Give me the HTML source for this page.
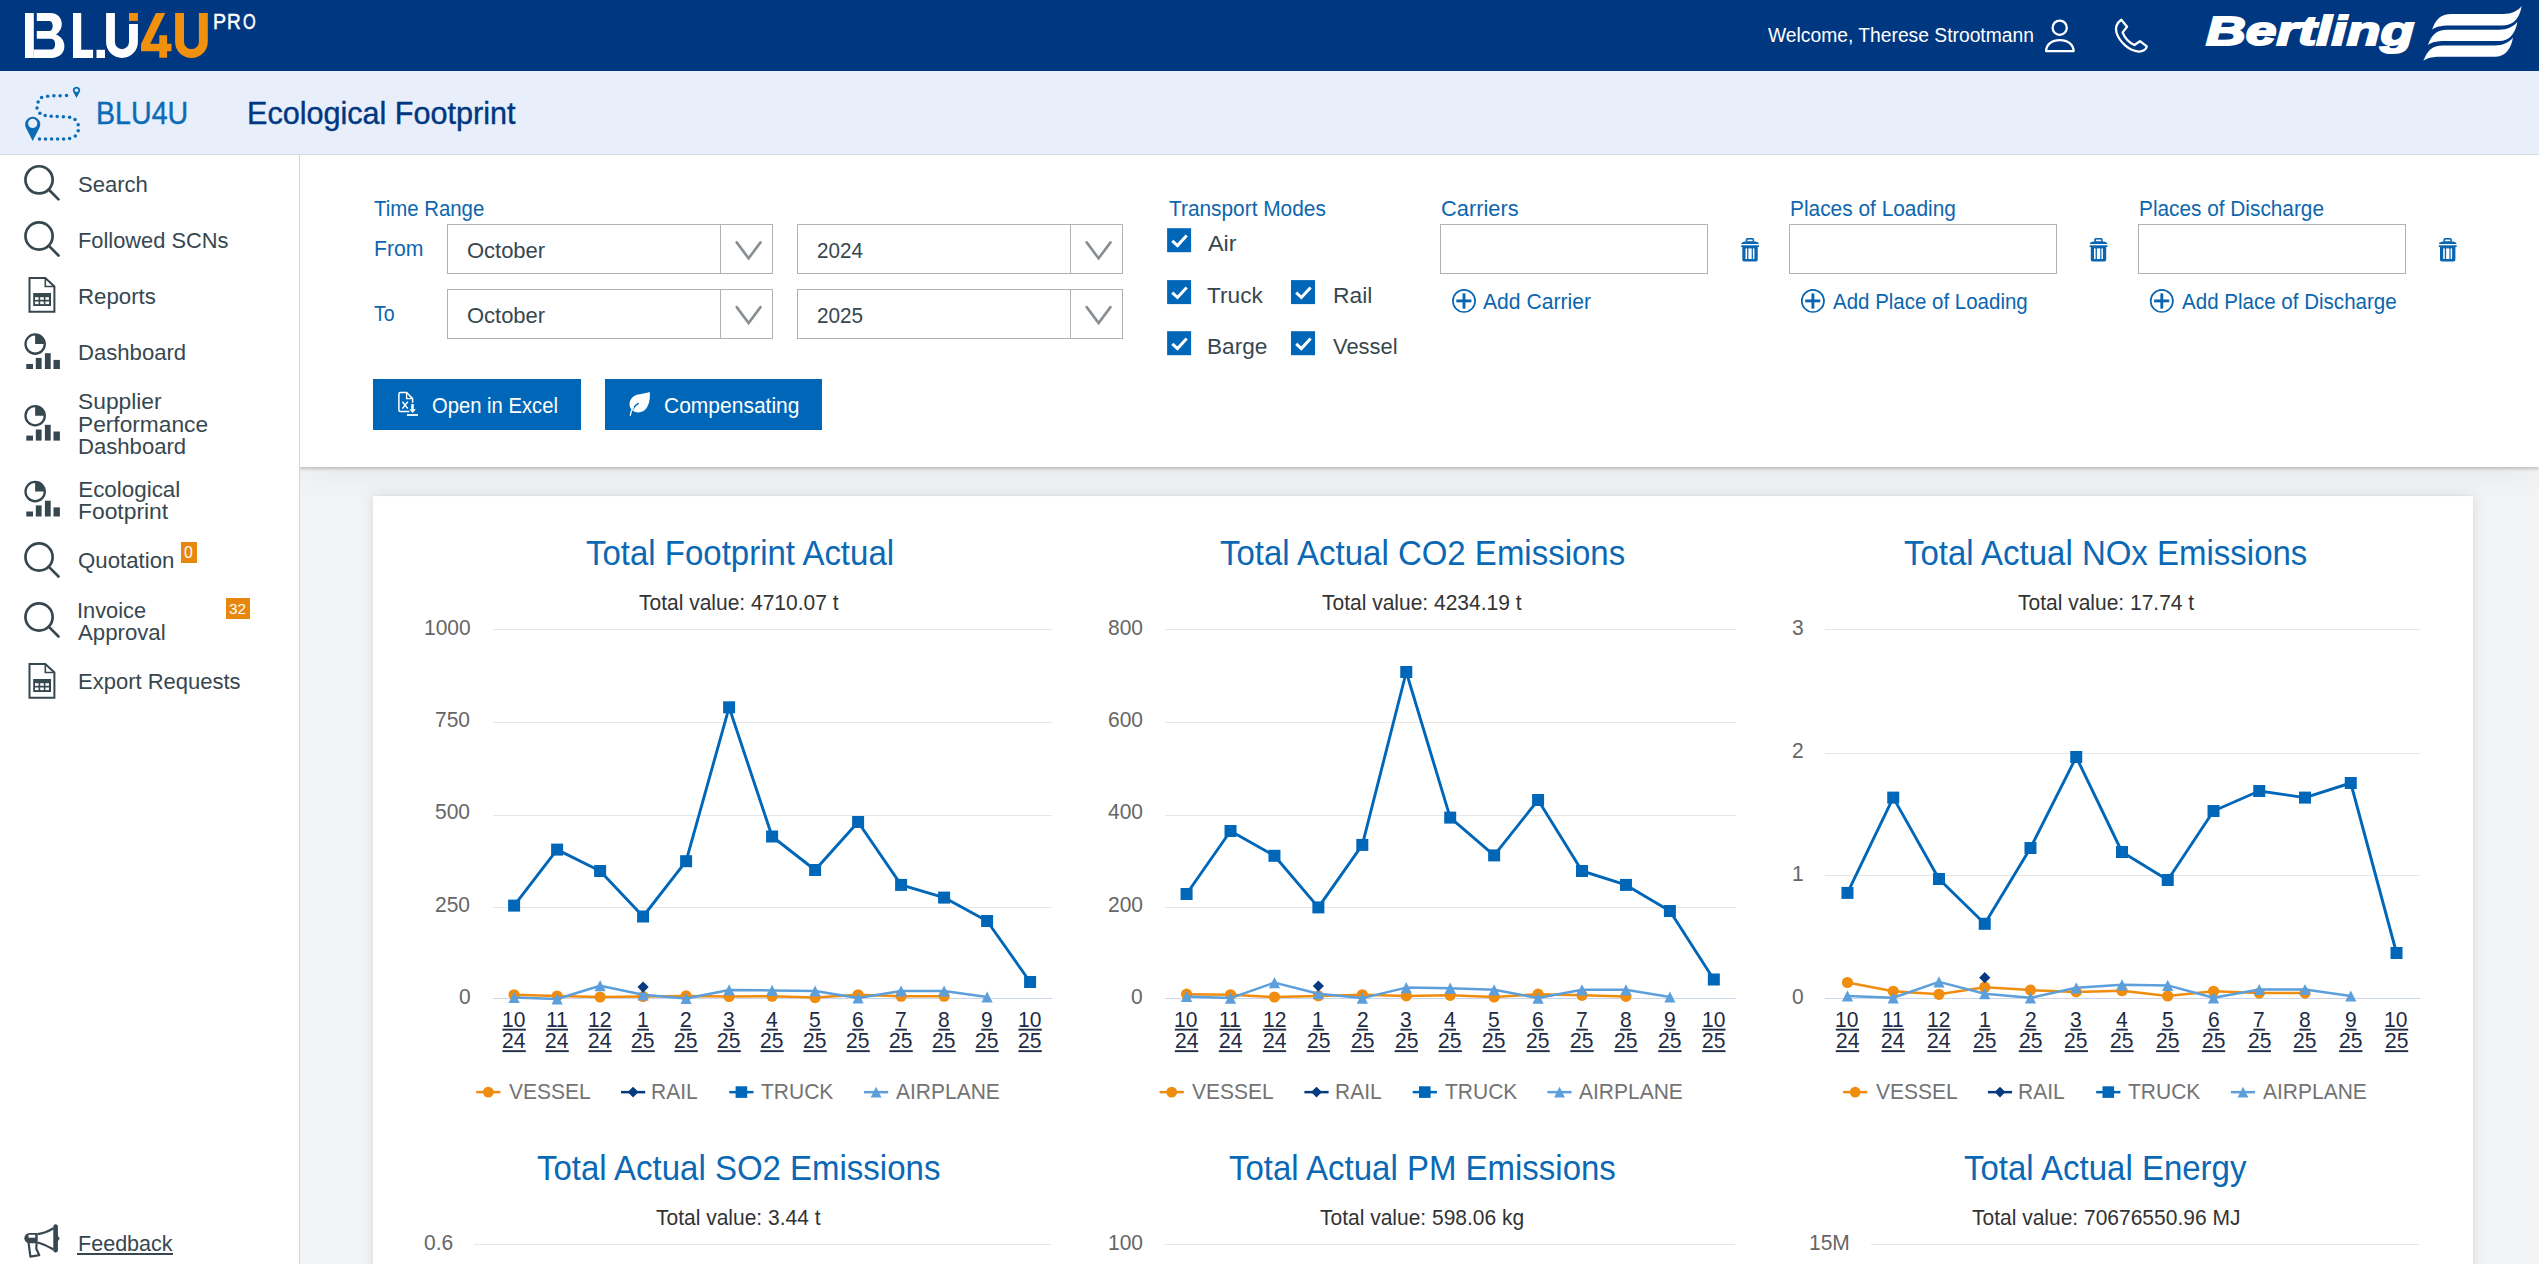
<!DOCTYPE html>
<html><head><meta charset="utf-8"><style>
html,body{margin:0;padding:0}
body{width:2539px;height:1264px;overflow:hidden;position:relative;background:#f3f4f6;font-family:"Liberation Sans",sans-serif}
.t{position:absolute;white-space:nowrap;line-height:1;transform-origin:0 0}
svg{position:absolute;overflow:visible}
</style></head><body>
<div style="position:absolute;left:373px;top:496px;width:2100px;height:800px;background:#fff;box-shadow:0 0 14px rgba(0,0,0,0.10),0 0 2px rgba(0,0,0,0.06)"></div>
<div style="position:absolute;left:300px;top:155px;width:2239px;height:312px;background:#fff;box-shadow:0 2px 3px rgba(0,0,0,0.20),0 6px 40px rgba(0,0,0,0.06)"></div>
<div style="position:absolute;left:0px;top:0px;width:2539px;height:71px;background:#003781"></div>
<div style="position:absolute;left:0px;top:71px;width:2539px;height:83px;background:#e8eefa"></div>
<div style="position:absolute;left:0px;top:154px;width:2539px;height:1px;background:#d6dbe3"></div>
<div style="position:absolute;left:0px;top:155px;width:299px;height:1109px;background:#fff"></div>
<div style="position:absolute;left:299px;top:155px;width:1px;height:1109px;background:#d4d4d4"></div>
<svg style="left:0;top:0" width="270" height="70" viewBox="0 0 270 70"><rect x="25" y="13" width="8.8" height="45" fill="#fff"/><path d="M36.8,13 L50.5,13 C57,13 61.8,17.5 61.8,24 C61.8,28.5 59.5,32 56,34.5 C61,36.5 64.4,40.5 64.4,46.5 C64.4,53 59,58 51.5,58 L33.8,58 L33.8,49.6 L51,49.6 C53.6,49.6 55.1,47.6 55.1,44.2 C55.1,40.8 53.6,38.7 51,38.7 L36.8,38.7 L36.8,30.9 L49,30.9 C51.3,30.9 52.7,29 52.7,25.9 C52.7,22.8 51.3,20.9 49,20.9 L36.8,20.9 Z" fill="#fff"/><path d="M73,13 L81.2,13 L81.2,49.8 L93.1,49.8 L93.1,58 L73,58 Z" fill="#fff"/><rect x="96.5" y="49.8" width="8.5" height="8.2" fill="#fff"/><path d="M106.1,13 L114.9,13 L114.9,42.1 A7.05,7.05 0 0 0 129,42.1 L129,24 L137.9,24 L137.9,42.1 A15.9,15.9 0 0 1 106.1,42.1 Z" fill="#fff"/><rect x="129" y="13" width="8.9" height="7.9" fill="#f0900c"/><path d="M155.9,13 L165.3,13 L150.2,43.7 L159.3,43.7 L159.3,35.2 L167.1,35.2 L167.1,43.7 L171.5,43.7 L171.5,51.3 L167.1,51.3 L167.1,57.7 L159.3,57.7 L159.3,51.3 L141,51.3 L141,44.2 Z" fill="#f0900c"/><path d="M175.1,13 L184,13 L184,41.65 A7.45,7.45 0 0 0 198.9,41.65 L198.9,13 L207.8,13 L207.8,41.65 A16.35,16.35 0 0 1 175.1,41.65 Z" fill="#f0900c"/></svg>
<div class="t" style="left:213.13px;top:10.00px;font-size:22.67px;color:#ffffff;transform:scaleX(0.8656);-webkit-text-stroke:0.5px #fff;">P</div>
<div class="t" style="left:227.27px;top:10.00px;font-size:22.67px;color:#ffffff;transform:scaleX(0.8450);-webkit-text-stroke:0.5px #fff;">R</div>
<div class="t" style="left:243.06px;top:10.00px;font-size:22.67px;color:#ffffff;transform:scaleX(0.7211);-webkit-text-stroke:0.5px #fff;">O</div>
<div class="t" style="left:1767.60px;top:25.00px;font-size:20.00px;color:#ffffff;transform:scaleX(0.9632);">Welcome, Therese Strootmann</div>
<svg style="left:2030px;top:10px" width="60" height="50" viewBox="2030 10 60 50"><circle cx="2059.7" cy="27.7" r="7.1" fill="none" stroke="#fff" stroke-width="2.3"/><path d="M2046.1,51.2 C2046.1,44.3 2052,40.1 2059.8,40.1 C2067.6,40.1 2073.6,44.3 2073.6,51.2 Z" fill="none" stroke="#fff" stroke-width="2.3" stroke-linejoin="round"/></svg>
<svg style="left:2105px;top:10px" width="50" height="50" viewBox="2105 10 50 50"><path d="M2121.3,19.8 L2127.1,26.8 L2122.6,32.4 C2124.5,37.5 2129,42.5 2134.4,45 L2140,41.2 L2146.8,46.3 C2146.3,49.8 2142.5,51.8 2138.6,51.6 C2129,50.8 2119.7,42 2116.6,33 C2115,28 2116.2,23.5 2121.3,19.8 Z" fill="none" stroke="#fff" stroke-width="2.3" stroke-linejoin="round"/></svg>
<div class="t" style="left:2206.40px;top:12.00px;font-size:39.97px;color:#ffffff;font-weight:bold;font-style:italic;transform:scaleX(1.3787);-webkit-text-stroke:2px #fff;">Bertling</div>
<svg style="left:2400px;top:0" width="139" height="70" viewBox="2400 0 139 70"><path d="M2432.0,29.5 C2436.0,19.5 2440.0,14.0 2452.0,14.0 L2503.0,14.0 C2512.0,14.0 2518.0,10.5 2521.7,6.0 C2520.0,16.0 2515.0,25.4 2503.0,25.4 L2450.0,25.4 C2440.0,25.4 2435.0,27.0 2432.0,29.5 Z" fill="#fff"/><path d="M2427.7,45.2 C2431.7,35.2 2435.7,29.7 2447.7,29.7 L2498.7,29.7 C2507.7,29.7 2513.7,26.2 2517.4,21.7 C2515.7,31.7 2510.7,41.1 2498.7,41.1 L2445.7,41.1 C2435.7,41.1 2430.7,42.7 2427.7,45.2 Z" fill="#fff"/><path d="M2423.3,60.9 C2427.3,50.9 2431.3,45.4 2443.3,45.4 L2494.3,45.4 C2503.3,45.4 2509.3,41.9 2513.0,37.4 C2511.3,47.4 2506.3,56.8 2494.3,56.8 L2441.3,56.8 C2431.3,56.8 2426.3,58.4 2423.3,60.9 Z" fill="#fff"/></svg>
<svg style="left:0;top:71px" width="100" height="83" viewBox="0 71 100 83"><circle cx="41.6" cy="97.4" r="1.75" fill="#0b6bb5"/><circle cx="47.7" cy="96.3" r="1.75" fill="#0b6bb5"/><circle cx="53.9" cy="95.7" r="1.75" fill="#0b6bb5"/><circle cx="60.1" cy="95.7" r="1.75" fill="#0b6bb5"/><circle cx="66.5" cy="95.5" r="1.75" fill="#0b6bb5"/><circle cx="38.1" cy="102.0" r="1.75" fill="#0b6bb5"/><circle cx="37.0" cy="108.0" r="1.75" fill="#0b6bb5"/><circle cx="39.9" cy="113.3" r="1.75" fill="#0b6bb5"/><circle cx="45.2" cy="115.5" r="1.75" fill="#0b6bb5"/><circle cx="51.2" cy="116.3" r="1.75" fill="#0b6bb5"/><circle cx="57.2" cy="116.5" r="1.75" fill="#0b6bb5"/><circle cx="63.4" cy="116.7" r="1.75" fill="#0b6bb5"/><circle cx="69.6" cy="117.2" r="1.75" fill="#0b6bb5"/><circle cx="75.0" cy="119.4" r="1.75" fill="#0b6bb5"/><circle cx="78.2" cy="124.7" r="1.75" fill="#0b6bb5"/><circle cx="78.2" cy="130.7" r="1.75" fill="#0b6bb5"/><circle cx="75.3" cy="136.0" r="1.75" fill="#0b6bb5"/><circle cx="69.6" cy="138.5" r="1.75" fill="#0b6bb5"/><circle cx="63.6" cy="138.9" r="1.75" fill="#0b6bb5"/><circle cx="57.6" cy="138.9" r="1.75" fill="#0b6bb5"/><circle cx="51.6" cy="138.9" r="1.75" fill="#0b6bb5"/><circle cx="45.5" cy="138.9" r="1.75" fill="#0b6bb5"/><circle cx="39.5" cy="138.9" r="1.75" fill="#0b6bb5"/><path d="M32.7,141 L26.3,128.5 A7.6,7.6 0 1 1 39.1,128.5 Z" fill="#0b6bb5"/><circle cx="32.7" cy="123.4" r="4.6" fill="#e8eefa"/><path d="M76.5,98 L73.4,92.2 A3.6,3.6 0 1 1 79.6,92.2 Z" fill="#0b6bb5"/><circle cx="76.5" cy="90.3" r="1.8" fill="#e8eefa"/></svg>
<div class="t" style="left:95.71px;top:98.00px;font-size:31.70px;color:#0b6bb5;transform:scaleX(0.9026);-webkit-text-stroke:0.4px #0b6bb5;">BLU4U</div>
<div class="t" style="left:247.15px;top:98.00px;font-size:31.70px;color:#003781;transform:scaleX(0.9647);-webkit-text-stroke:0.4px #003781;">Ecological Footprint</div>
<svg style="left:0;top:0" width="299" height="1264" viewBox="0 0 299 1264"><circle cx="39.05" cy="179.85" r="13.60" fill="none" stroke="#37474f" stroke-width="2.7"/><line x1="48.67" y1="189.47" x2="58.50" y2="199.35" stroke="#37474f" stroke-width="2.7" stroke-linecap="round"/><circle cx="39.05" cy="236.00" r="13.60" fill="none" stroke="#37474f" stroke-width="2.7"/><line x1="48.67" y1="245.62" x2="58.50" y2="255.50" stroke="#37474f" stroke-width="2.7" stroke-linecap="round"/><circle cx="39.05" cy="557.00" r="13.60" fill="none" stroke="#37474f" stroke-width="2.7"/><line x1="48.67" y1="566.62" x2="58.50" y2="576.50" stroke="#37474f" stroke-width="2.7" stroke-linecap="round"/><circle cx="39.05" cy="617.00" r="13.60" fill="none" stroke="#37474f" stroke-width="2.7"/><line x1="48.67" y1="626.62" x2="58.50" y2="636.50" stroke="#37474f" stroke-width="2.7" stroke-linecap="round"/><path d="M29.5,278.0 L45.3,278.0 L54.4,286.5 L54.4,311.7 L29.5,311.7 Z" fill="none" stroke="#37474f" stroke-width="2"/><path d="M45.3,278.0 L45.3,286.5 L54.4,286.5" fill="none" stroke="#37474f" stroke-width="1.6"/><rect x="33.2" y="293.0" width="17.8" height="13" fill="#37474f"/><rect x="35.0" y="297.2" width="3.6" height="2.6" fill="#fff"/><rect x="40.2" y="297.2" width="3.6" height="2.6" fill="#fff"/><rect x="45.4" y="297.2" width="3.6" height="2.6" fill="#fff"/><rect x="35.0" y="301.5" width="3.6" height="2.6" fill="#fff"/><rect x="40.2" y="301.5" width="3.6" height="2.6" fill="#fff"/><rect x="45.4" y="301.5" width="3.6" height="2.6" fill="#fff"/><path d="M29.5,664.0 L45.3,664.0 L54.4,672.5 L54.4,697.7 L29.5,697.7 Z" fill="none" stroke="#37474f" stroke-width="2"/><path d="M45.3,664.0 L45.3,672.5 L54.4,672.5" fill="none" stroke="#37474f" stroke-width="1.6"/><rect x="33.2" y="679.0" width="17.8" height="13" fill="#37474f"/><rect x="35.0" y="683.2" width="3.6" height="2.6" fill="#fff"/><rect x="40.2" y="683.2" width="3.6" height="2.6" fill="#fff"/><rect x="45.4" y="683.2" width="3.6" height="2.6" fill="#fff"/><rect x="35.0" y="687.5" width="3.6" height="2.6" fill="#fff"/><rect x="40.2" y="687.5" width="3.6" height="2.6" fill="#fff"/><rect x="45.4" y="687.5" width="3.6" height="2.6" fill="#fff"/><circle cx="35.15" cy="344.10" r="9.65" fill="none" stroke="#37474f" stroke-width="2.3"/><path d="M35.15,344.10 L35.15,334.45 A9.65,9.65 0 0 1 44.8,344.10 Z" fill="#37474f"/><rect x="26.3" y="364.00" width="6.7" height="5.00" fill="#37474f"/><rect x="35.8" y="357.90" width="5.8" height="11.10" fill="#37474f"/><rect x="44.9" y="353.20" width="5.8" height="15.80" fill="#37474f"/><rect x="53.5" y="359.90" width="6.4" height="9.10" fill="#37474f"/><circle cx="35.15" cy="415.70" r="9.65" fill="none" stroke="#37474f" stroke-width="2.3"/><path d="M35.15,415.70 L35.15,406.05 A9.65,9.65 0 0 1 44.8,415.70 Z" fill="#37474f"/><rect x="26.3" y="435.60" width="6.7" height="5.00" fill="#37474f"/><rect x="35.8" y="429.50" width="5.8" height="11.10" fill="#37474f"/><rect x="44.9" y="424.80" width="5.8" height="15.80" fill="#37474f"/><rect x="53.5" y="431.50" width="6.4" height="9.10" fill="#37474f"/><circle cx="35.15" cy="491.60" r="9.65" fill="none" stroke="#37474f" stroke-width="2.3"/><path d="M35.15,491.60 L35.15,481.95 A9.65,9.65 0 0 1 44.8,491.60 Z" fill="#37474f"/><rect x="26.3" y="511.50" width="6.7" height="5.00" fill="#37474f"/><rect x="35.8" y="505.40" width="5.8" height="11.10" fill="#37474f"/><rect x="44.9" y="500.70" width="5.8" height="15.80" fill="#37474f"/><rect x="53.5" y="507.40" width="6.4" height="9.10" fill="#37474f"/><rect x="53.3" y="1224.2" width="4.6" height="28.4" rx="2.3" fill="#37474f"/><path d="M57,1234.5 L59.7,1238.4 L57,1242.3 Z" fill="#37474f"/><path d="M29.5,1233 L37.7,1233 L37.7,1243.3 L29.5,1243.3 A5.15,5.15 0 0 1 29.5,1233 Z" fill="#37474f"/><rect x="28.5" y="1234.8" width="6.7" height="2.9" fill="#fff"/><path d="M37.7,1234.2 C44,1233.5 49,1231 53.5,1228.3 M37.7,1242.5 C44,1244 49,1247 53.5,1249.5" fill="none" stroke="#37474f" stroke-width="2.2"/><path d="M28.6,1243 L30.4,1256.6 L39.3,1255.2 L36.3,1248.8 L36.6,1243" fill="none" stroke="#37474f" stroke-width="2.2" stroke-linejoin="round"/></svg>
<div class="t" style="left:77.61px;top:174.00px;font-size:22.40px;color:#37474f;transform:scaleX(0.9849);">Search</div>
<div class="t" style="left:77.75px;top:230.00px;font-size:22.40px;color:#37474f;transform:scaleX(0.9746);">Followed SCNs</div>
<div class="t" style="left:77.92px;top:286.00px;font-size:22.40px;color:#37474f;transform:scaleX(0.9931);">Reports</div>
<div class="t" style="left:77.73px;top:342.00px;font-size:22.40px;color:#37474f;transform:scaleX(0.9869);">Dashboard</div>
<div class="t" style="left:77.97px;top:391.00px;font-size:22.40px;color:#37474f;transform:scaleX(1.0179);">Supplier</div>
<div class="t" style="left:77.93px;top:414.00px;font-size:22.40px;color:#37474f;transform:scaleX(1.0144);">Performance</div>
<div class="t" style="left:77.73px;top:436.00px;font-size:22.40px;color:#37474f;transform:scaleX(0.9869);">Dashboard</div>
<div class="t" style="left:78.21px;top:479.00px;font-size:22.40px;color:#37474f;">Ecological</div>
<div class="t" style="left:78.17px;top:501.00px;font-size:22.40px;color:#37474f;transform:scaleX(1.0201);">Footprint</div>
<div class="t" style="left:77.80px;top:550.00px;font-size:22.40px;color:#37474f;transform:scaleX(0.9922);">Quotation</div>
<div class="t" style="left:77.44px;top:600.00px;font-size:22.40px;color:#37474f;transform:scaleX(0.9739);">Invoice</div>
<div class="t" style="left:78.00px;top:622.00px;font-size:22.40px;color:#37474f;transform:scaleX(0.9918);">Approval</div>
<div class="t" style="left:78.04px;top:671.00px;font-size:22.40px;color:#37474f;transform:scaleX(0.9824);">Export Requests</div>
<div class="t" style="left:77.78px;top:1233.00px;font-size:22.40px;color:#37474f;transform:scaleX(0.9623);">Feedback</div>
<div style="position:absolute;left:77.4px;top:1252.9px;width:95.6px;height:1.9px;background:#37474f"></div>
<div style="position:absolute;left:180.9px;top:542.1px;width:16.1px;height:20.6px;background:#e8870e"></div>
<div class="t" style="left:183.77px;top:545.00px;font-size:15.70px;color:#fff;transform:scaleX(1.0086);">0</div>
<div style="position:absolute;left:226px;top:598px;width:23.9px;height:21px;background:#e8870e"></div>
<div class="t" style="left:228.69px;top:601.00px;font-size:15.55px;color:#fff;transform:scaleX(0.9834);">32</div>
<div class="t" style="left:374.49px;top:198.00px;font-size:21.60px;color:#0e66ae;transform:scaleX(0.9441);">Time Range</div>
<div class="t" style="left:374.30px;top:238.00px;font-size:21.60px;color:#0e66ae;transform:scaleX(0.9830);">From</div>
<div class="t" style="left:374.36px;top:303.00px;font-size:21.60px;color:#0e66ae;transform:scaleX(0.9050);">To</div>
<div style="position:absolute;left:447px;top:224px;width:326px;height:50px;box-sizing:border-box;border:1px solid #b2b2b2;background:#fff"></div>
<div style="position:absolute;left:720px;top:224px;width:1px;height:49px;background:#b2b2b2"></div>
<div style="position:absolute;left:797px;top:224px;width:326px;height:50px;box-sizing:border-box;border:1px solid #b2b2b2;background:#fff"></div>
<div style="position:absolute;left:1070px;top:224px;width:1px;height:49px;background:#b2b2b2"></div>
<div style="position:absolute;left:447px;top:289px;width:326px;height:50px;box-sizing:border-box;border:1px solid #b2b2b2;background:#fff"></div>
<div style="position:absolute;left:720px;top:289px;width:1px;height:49px;background:#b2b2b2"></div>
<div style="position:absolute;left:797px;top:289px;width:326px;height:50px;box-sizing:border-box;border:1px solid #b2b2b2;background:#fff"></div>
<div style="position:absolute;left:1070px;top:289px;width:1px;height:49px;background:#b2b2b2"></div>
<svg style="left:0;top:0" width="1200" height="400" viewBox="0 0 1200 400"><path d="M736.7,242.4 L748.6,258.4 L760.5,242.4" fill="none" stroke="#878f94" stroke-width="2.6" stroke-linecap="round"/><path d="M1086.7,242.4 L1098.6,258.4 L1110.5,242.4" fill="none" stroke="#878f94" stroke-width="2.6" stroke-linecap="round"/><path d="M736.7,307.1 L748.6,323.1 L760.5,307.1" fill="none" stroke="#878f94" stroke-width="2.6" stroke-linecap="round"/><path d="M1086.7,307.1 L1098.6,323.1 L1110.5,307.1" fill="none" stroke="#878f94" stroke-width="2.6" stroke-linecap="round"/></svg>
<div class="t" style="left:466.91px;top:240.00px;font-size:22.00px;color:#37474f;">October</div>
<div class="t" style="left:466.91px;top:305.00px;font-size:22.00px;color:#37474f;">October</div>
<div class="t" style="left:816.67px;top:240.00px;font-size:22.00px;color:#37474f;transform:scaleX(0.9388);">2024</div>
<div class="t" style="left:816.66px;top:305.00px;font-size:22.00px;color:#37474f;transform:scaleX(0.9432);">2025</div>
<div class="t" style="left:1168.88px;top:198.00px;font-size:21.60px;color:#0e66ae;transform:scaleX(0.9656);">Transport Modes</div>
<svg style="left:0;top:0" width="1400" height="400" viewBox="0 0 1400 400"><rect x="1167.1" y="228.2" width="24" height="24" fill="#0067b8"/><path d="M1172.3,240.8 L1177.5,245.6 L1186.7,235.6" fill="none" stroke="#fff" stroke-width="3"/><rect x="1167.1" y="280.1" width="24" height="24" fill="#0067b8"/><path d="M1172.3,292.7 L1177.5,297.5 L1186.7,287.5" fill="none" stroke="#fff" stroke-width="3"/><rect x="1291.0" y="280.1" width="24" height="24" fill="#0067b8"/><path d="M1296.2,292.7 L1301.4,297.5 L1310.6,287.5" fill="none" stroke="#fff" stroke-width="3"/><rect x="1167.1" y="331.2" width="24" height="24" fill="#0067b8"/><path d="M1172.3,343.8 L1177.5,348.6 L1186.7,338.6" fill="none" stroke="#fff" stroke-width="3"/><rect x="1291.0" y="331.2" width="24" height="24" fill="#0067b8"/><path d="M1296.2,343.8 L1301.4,348.6 L1310.6,338.6" fill="none" stroke="#fff" stroke-width="3"/></svg>
<div class="t" style="left:1207.90px;top:233.00px;font-size:22.40px;color:#37474f;transform:scaleX(1.0448);">Air</div>
<div class="t" style="left:1207.45px;top:285.00px;font-size:22.40px;color:#37474f;transform:scaleX(1.0115);">Truck</div>
<div class="t" style="left:1332.57px;top:285.00px;font-size:22.40px;color:#37474f;transform:scaleX(1.0204);">Rail</div>
<div class="t" style="left:1207.19px;top:336.00px;font-size:22.40px;color:#37474f;transform:scaleX(1.0106);">Barge</div>
<div class="t" style="left:1332.89px;top:336.00px;font-size:22.40px;color:#37474f;transform:scaleX(0.9783);">Vessel</div>
<div class="t" style="left:1441.31px;top:198.00px;font-size:21.60px;color:#0e66ae;transform:scaleX(1.0113);">Carriers</div>
<div class="t" style="left:1789.73px;top:198.00px;font-size:21.60px;color:#0e66ae;transform:scaleX(0.9663);">Places of Loading</div>
<div class="t" style="left:2139.14px;top:198.00px;font-size:21.60px;color:#0e66ae;transform:scaleX(0.9634);">Places of Discharge</div>
<div style="position:absolute;left:1440px;top:224px;width:268px;height:50px;box-sizing:border-box;border:1px solid #b2b2b2;background:#fff"></div>
<div style="position:absolute;left:1789px;top:224px;width:268px;height:50px;box-sizing:border-box;border:1px solid #b2b2b2;background:#fff"></div>
<div style="position:absolute;left:2138px;top:224px;width:268px;height:50px;box-sizing:border-box;border:1px solid #b2b2b2;background:#fff"></div>
<svg style="left:0;top:0" width="2539" height="400" viewBox="0 0 2539 400"><path d="M1745.6,241.8 L1745.9,239.2 Q1746.3,237.9 1747.3,237.9 L1752.6,237.9 Q1753.6,237.9 1754.0,239.2 L1754.3,241.8 Z" fill="#0a65b0"/><rect x="1747.4" y="239.6" width="5.2" height="1.6" fill="#fff"/><path d="M1741.1,244 L1742.0,242.6 L1744.5,241.6 L1755.6,241.6 L1758.1,242.6 L1759.0,244 Z" fill="#0a65b0"/><rect x="1741.1" y="245.3" width="17.9" height="1.7" fill="#0a65b0"/><path d="M1742.3,246.8 L1757.7,246.8 L1757.7,259.4 Q1757.7,261.6 1755.5,261.6 L1744.5,261.6 Q1742.3,261.6 1742.3,259.4 Z" fill="#0a65b0"/><rect x="1745.5" y="248.4" width="1.6" height="10.6" fill="#fff"/><rect x="1748.4" y="248.4" width="3.3" height="10.6" fill="#fff"/><rect x="1752.9" y="248.4" width="1.5" height="10.6" fill="#fff"/><path d="M2094.1,241.8 L2094.4,239.2 Q2094.8,237.9 2095.8,237.9 L2101.1,237.9 Q2102.1,237.9 2102.5,239.2 L2102.8,241.8 Z" fill="#0a65b0"/><rect x="2095.9" y="239.6" width="5.2" height="1.6" fill="#fff"/><path d="M2089.6,244 L2090.5,242.6 L2093.0,241.6 L2104.1,241.6 L2106.6,242.6 L2107.5,244 Z" fill="#0a65b0"/><rect x="2089.6" y="245.3" width="17.9" height="1.7" fill="#0a65b0"/><path d="M2090.8,246.8 L2106.2,246.8 L2106.2,259.4 Q2106.2,261.6 2104.0,261.6 L2093.0,261.6 Q2090.8,261.6 2090.8,259.4 Z" fill="#0a65b0"/><rect x="2094.0" y="248.4" width="1.6" height="10.6" fill="#fff"/><rect x="2096.9" y="248.4" width="3.3" height="10.6" fill="#fff"/><rect x="2101.4" y="248.4" width="1.5" height="10.6" fill="#fff"/><path d="M2443.3,241.8 L2443.6,239.2 Q2444.0,237.9 2445.0,237.9 L2450.3,237.9 Q2451.3,237.9 2451.7,239.2 L2452.0,241.8 Z" fill="#0a65b0"/><rect x="2445.1" y="239.6" width="5.2" height="1.6" fill="#fff"/><path d="M2438.8,244 L2439.7,242.6 L2442.2,241.6 L2453.3,241.6 L2455.8,242.6 L2456.7,244 Z" fill="#0a65b0"/><rect x="2438.8" y="245.3" width="17.9" height="1.7" fill="#0a65b0"/><path d="M2440.0,246.8 L2455.4,246.8 L2455.4,259.4 Q2455.4,261.6 2453.2,261.6 L2442.2,261.6 Q2440.0,261.6 2440.0,259.4 Z" fill="#0a65b0"/><rect x="2443.2" y="248.4" width="1.6" height="10.6" fill="#fff"/><rect x="2446.1" y="248.4" width="3.3" height="10.6" fill="#fff"/><rect x="2450.6" y="248.4" width="1.5" height="10.6" fill="#fff"/><circle cx="1464.0" cy="300.9" r="11.1" fill="none" stroke="#0a65b0" stroke-width="1.7"/><rect x="1456.3" y="299.48" width="15.1" height="2.85" fill="#0a65b0"/><rect x="1462.58" y="293.4" width="2.85" height="15.2" fill="#0a65b0"/><circle cx="1812.9" cy="300.9" r="11.1" fill="none" stroke="#0a65b0" stroke-width="1.7"/><rect x="1805.2" y="299.48" width="15.1" height="2.85" fill="#0a65b0"/><rect x="1811.48" y="293.4" width="2.85" height="15.2" fill="#0a65b0"/><circle cx="2161.8" cy="300.9" r="11.1" fill="none" stroke="#0a65b0" stroke-width="1.7"/><rect x="2154.1" y="299.48" width="15.1" height="2.85" fill="#0a65b0"/><rect x="2160.38" y="293.4" width="2.85" height="15.2" fill="#0a65b0"/></svg>
<div class="t" style="left:1483.30px;top:291.00px;font-size:21.60px;color:#0a65b0;transform:scaleX(0.9786);">Add Carrier</div>
<div class="t" style="left:1833.20px;top:291.00px;font-size:21.60px;color:#0a65b0;transform:scaleX(0.9485);">Add Place of Loading</div>
<div class="t" style="left:2182.00px;top:291.00px;font-size:21.60px;color:#0a65b0;transform:scaleX(0.9513);">Add Place of Discharge</div>
<div style="position:absolute;left:373px;top:379px;width:208px;height:51px;background:#0067b8"></div>
<div style="position:absolute;left:605px;top:379px;width:217px;height:51px;background:#0067b8"></div>
<div class="t" style="left:432.39px;top:395.00px;font-size:21.60px;color:#fff;transform:scaleX(0.9365);">Open in Excel</div>
<div class="t" style="left:663.95px;top:395.00px;font-size:21.60px;color:#fff;transform:scaleX(0.9727);">Compensating</div>
<svg style="left:0;top:0" width="700" height="430" viewBox="0 0 700 430"><path d="M409.4,411.5 L400.4,411.5 Q398.9,411.5 398.9,410 L398.9,394 Q398.9,392.5 400.4,392.5 L406.6,392.5 L412.6,398.6 L412.6,402.7" fill="none" stroke="#fff" stroke-width="1.5"/><path d="M406.6,392.5 L406.6,398.6 L412.6,398.6" fill="none" stroke="#fff" stroke-width="1.3"/><path d="M402.4,401.8 L407.8,408.6 M407.8,401.8 L402.4,408.6" stroke="#fff" stroke-width="1.5"/><rect x="411.2" y="404.1" width="2.6" height="5.5" fill="#fff"/><path d="M409.4,409.2 L415.9,409.2 L412.6,412.9 Z" fill="#fff"/><rect x="407" y="414.1" width="11" height="1.8" fill="#fff"/><path d="M649.7,392.1 C643,394.5 636,393.6 632.3,397.5 C628.8,401.2 628.6,406.3 631.8,409.8 C635.2,413.4 642.3,413.6 646.2,408.6 C649.6,404.2 650.3,397.2 649.7,392.1 Z" fill="#fff"/><path d="M638.2,403.4 C636,404.6 634,406.6 632.6,409.6" fill="none" stroke="#0067b8" stroke-width="1.4" stroke-linecap="round"/><path d="M633.4,407.6 C631.6,409.6 630.6,412.2 630.3,415.3" fill="none" stroke="#fff" stroke-width="1.3" stroke-linecap="round"/></svg>
<svg style="left:0;top:0" width="2539" height="1264" viewBox="0 0 2539 1264"><rect x="493" y="629" width="559" height="1" fill="#e6e6e6"/><rect x="493" y="722" width="559" height="1" fill="#e6e6e6"/><rect x="493" y="815" width="559" height="1" fill="#e6e6e6"/><rect x="493" y="907" width="559" height="1" fill="#e6e6e6"/><rect x="493" y="998" width="559" height="1" fill="#ccd6eb"/><path d="M514.10,994.80 L557.10,996.00 L600.10,997.00 L643.10,996.50 L686.10,995.90 L729.10,996.50 L772.10,996.20 L815.10,997.60 L858.10,994.80 L901.10,996.20 L944.10,996.20" fill="none" stroke="#f08c0e" stroke-width="2.5" stroke-linejoin="round" stroke-linecap="round"/><circle cx="514.10" cy="994.80" r="5.60" fill="#f08c0e"/><circle cx="557.10" cy="996.00" r="5.60" fill="#f08c0e"/><circle cx="600.10" cy="997.00" r="5.60" fill="#f08c0e"/><circle cx="643.10" cy="996.50" r="5.60" fill="#f08c0e"/><circle cx="686.10" cy="995.90" r="5.60" fill="#f08c0e"/><circle cx="729.10" cy="996.50" r="5.60" fill="#f08c0e"/><circle cx="772.10" cy="996.20" r="5.60" fill="#f08c0e"/><circle cx="815.10" cy="997.60" r="5.60" fill="#f08c0e"/><circle cx="858.10" cy="994.80" r="5.60" fill="#f08c0e"/><circle cx="901.10" cy="996.20" r="5.60" fill="#f08c0e"/><circle cx="944.10" cy="996.20" r="5.60" fill="#f08c0e"/><path d="M514.10,997.50 L557.10,999.00 L600.10,985.70 L643.10,994.80 L686.10,998.50 L729.10,989.90 L772.10,990.40 L815.10,991.00 L858.10,998.00 L901.10,991.00 L944.10,991.00 L987.10,997.00" fill="none" stroke="#5c9fdb" stroke-width="2.5" stroke-linejoin="round" stroke-linecap="round"/><path d="M514.10,991.90 L519.70,1003.10 L508.50,1003.10 Z" fill="#5c9fdb"/><path d="M557.10,993.40 L562.70,1004.60 L551.50,1004.60 Z" fill="#5c9fdb"/><path d="M600.10,980.10 L605.70,991.30 L594.50,991.30 Z" fill="#5c9fdb"/><path d="M643.10,989.20 L648.70,1000.40 L637.50,1000.40 Z" fill="#5c9fdb"/><path d="M686.10,992.90 L691.70,1004.10 L680.50,1004.10 Z" fill="#5c9fdb"/><path d="M729.10,984.30 L734.70,995.50 L723.50,995.50 Z" fill="#5c9fdb"/><path d="M772.10,984.80 L777.70,996.00 L766.50,996.00 Z" fill="#5c9fdb"/><path d="M815.10,985.40 L820.70,996.60 L809.50,996.60 Z" fill="#5c9fdb"/><path d="M858.10,992.40 L863.70,1003.60 L852.50,1003.60 Z" fill="#5c9fdb"/><path d="M901.10,985.40 L906.70,996.60 L895.50,996.60 Z" fill="#5c9fdb"/><path d="M944.10,985.40 L949.70,996.60 L938.50,996.60 Z" fill="#5c9fdb"/><path d="M987.10,991.40 L992.70,1002.60 L981.50,1002.60 Z" fill="#5c9fdb"/><path d="M643.10,981.50 L648.70,987.10 L643.10,992.70 L637.50,987.10 Z" fill="#073a80"/><path d="M514.10,905.60 L557.10,849.60 L600.10,871.00 L643.10,916.50 L686.10,861.20 L729.10,707.30 L772.10,836.50 L815.10,870.00 L858.10,822.00 L901.10,884.90 L944.10,897.60 L987.10,921.00 L1030.10,982.00" fill="none" stroke="#0066b8" stroke-width="2.9" stroke-linejoin="round" stroke-linecap="round"/><rect x="508.10" y="899.60" width="12.00" height="12.00" fill="#0066b8"/><rect x="551.10" y="843.60" width="12.00" height="12.00" fill="#0066b8"/><rect x="594.10" y="865.00" width="12.00" height="12.00" fill="#0066b8"/><rect x="637.10" y="910.50" width="12.00" height="12.00" fill="#0066b8"/><rect x="680.10" y="855.20" width="12.00" height="12.00" fill="#0066b8"/><rect x="723.10" y="701.30" width="12.00" height="12.00" fill="#0066b8"/><rect x="766.10" y="830.50" width="12.00" height="12.00" fill="#0066b8"/><rect x="809.10" y="864.00" width="12.00" height="12.00" fill="#0066b8"/><rect x="852.10" y="816.00" width="12.00" height="12.00" fill="#0066b8"/><rect x="895.10" y="878.90" width="12.00" height="12.00" fill="#0066b8"/><rect x="938.10" y="891.60" width="12.00" height="12.00" fill="#0066b8"/><rect x="981.10" y="915.00" width="12.00" height="12.00" fill="#0066b8"/><rect x="1024.10" y="976.00" width="12.00" height="12.00" fill="#0066b8"/><rect x="502.42" y="1028.70" width="23.36" height="1.9" fill="#1e2b45"/><rect x="502.42" y="1050.20" width="23.36" height="1.9" fill="#1e2b45"/><rect x="546.20" y="1028.70" width="21.80" height="1.9" fill="#1e2b45"/><rect x="545.42" y="1050.20" width="23.36" height="1.9" fill="#1e2b45"/><rect x="588.42" y="1028.70" width="23.36" height="1.9" fill="#1e2b45"/><rect x="588.42" y="1050.20" width="23.36" height="1.9" fill="#1e2b45"/><rect x="637.26" y="1028.70" width="11.68" height="1.9" fill="#1e2b45"/><rect x="631.42" y="1050.20" width="23.36" height="1.9" fill="#1e2b45"/><rect x="680.26" y="1028.70" width="11.68" height="1.9" fill="#1e2b45"/><rect x="674.42" y="1050.20" width="23.36" height="1.9" fill="#1e2b45"/><rect x="723.26" y="1028.70" width="11.68" height="1.9" fill="#1e2b45"/><rect x="717.42" y="1050.20" width="23.36" height="1.9" fill="#1e2b45"/><rect x="766.26" y="1028.70" width="11.68" height="1.9" fill="#1e2b45"/><rect x="760.42" y="1050.20" width="23.36" height="1.9" fill="#1e2b45"/><rect x="809.26" y="1028.70" width="11.68" height="1.9" fill="#1e2b45"/><rect x="803.42" y="1050.20" width="23.36" height="1.9" fill="#1e2b45"/><rect x="852.26" y="1028.70" width="11.68" height="1.9" fill="#1e2b45"/><rect x="846.42" y="1050.20" width="23.36" height="1.9" fill="#1e2b45"/><rect x="895.26" y="1028.70" width="11.68" height="1.9" fill="#1e2b45"/><rect x="889.42" y="1050.20" width="23.36" height="1.9" fill="#1e2b45"/><rect x="938.26" y="1028.70" width="11.68" height="1.9" fill="#1e2b45"/><rect x="932.42" y="1050.20" width="23.36" height="1.9" fill="#1e2b45"/><rect x="981.26" y="1028.70" width="11.68" height="1.9" fill="#1e2b45"/><rect x="975.42" y="1050.20" width="23.36" height="1.9" fill="#1e2b45"/><rect x="1018.42" y="1028.70" width="23.36" height="1.9" fill="#1e2b45"/><rect x="1018.42" y="1050.20" width="23.36" height="1.9" fill="#1e2b45"/><rect x="476.20" y="1090.9" width="24.2" height="2.5" fill="#f08c0e"/><circle cx="488.30" cy="1092.10" r="5.40" fill="#f08c0e"/><rect x="621.00" y="1090.9" width="24.2" height="2.5" fill="#073a80"/><path d="M633.10,1086.70 L638.50,1092.10 L633.10,1097.50 L627.70,1092.10 Z" fill="#073a80"/><rect x="729.30" y="1090.9" width="24.2" height="2.5" fill="#0066b8"/><rect x="735.60" y="1086.30" width="11.60" height="11.60" fill="#0066b8"/><rect x="864.00" y="1090.9" width="24.2" height="2.5" fill="#5c9fdb"/><path d="M876.10,1086.70 L881.50,1097.50 L870.70,1097.50 Z" fill="#5c9fdb"/><rect x="1165" y="629" width="571" height="1" fill="#e6e6e6"/><rect x="1165" y="722" width="571" height="1" fill="#e6e6e6"/><rect x="1165" y="815" width="571" height="1" fill="#e6e6e6"/><rect x="1165" y="907" width="571" height="1" fill="#e6e6e6"/><rect x="1165" y="998" width="571" height="1" fill="#ccd6eb"/><path d="M1186.57,994.20 L1230.51,994.80 L1274.45,997.00 L1318.38,995.90 L1362.32,994.80 L1406.26,995.90 L1450.20,995.30 L1494.14,997.00 L1538.08,994.20 L1582.02,995.30 L1625.95,996.40" fill="none" stroke="#f08c0e" stroke-width="2.5" stroke-linejoin="round" stroke-linecap="round"/><circle cx="1186.57" cy="994.20" r="5.60" fill="#f08c0e"/><circle cx="1230.51" cy="994.80" r="5.60" fill="#f08c0e"/><circle cx="1274.45" cy="997.00" r="5.60" fill="#f08c0e"/><circle cx="1318.38" cy="995.90" r="5.60" fill="#f08c0e"/><circle cx="1362.32" cy="994.80" r="5.60" fill="#f08c0e"/><circle cx="1406.26" cy="995.90" r="5.60" fill="#f08c0e"/><circle cx="1450.20" cy="995.30" r="5.60" fill="#f08c0e"/><circle cx="1494.14" cy="997.00" r="5.60" fill="#f08c0e"/><circle cx="1538.08" cy="994.20" r="5.60" fill="#f08c0e"/><circle cx="1582.02" cy="995.30" r="5.60" fill="#f08c0e"/><circle cx="1625.95" cy="996.40" r="5.60" fill="#f08c0e"/><path d="M1186.57,996.40 L1230.51,998.10 L1274.45,982.60 L1318.38,993.70 L1362.32,998.10 L1406.26,987.60 L1450.20,988.20 L1494.14,989.80 L1538.08,998.10 L1582.02,989.80 L1625.95,989.80 L1669.89,997.00" fill="none" stroke="#5c9fdb" stroke-width="2.5" stroke-linejoin="round" stroke-linecap="round"/><path d="M1186.57,990.80 L1192.17,1002.00 L1180.97,1002.00 Z" fill="#5c9fdb"/><path d="M1230.51,992.50 L1236.11,1003.70 L1224.91,1003.70 Z" fill="#5c9fdb"/><path d="M1274.45,977.00 L1280.05,988.20 L1268.85,988.20 Z" fill="#5c9fdb"/><path d="M1318.38,988.10 L1323.98,999.30 L1312.78,999.30 Z" fill="#5c9fdb"/><path d="M1362.32,992.50 L1367.92,1003.70 L1356.72,1003.70 Z" fill="#5c9fdb"/><path d="M1406.26,982.00 L1411.86,993.20 L1400.66,993.20 Z" fill="#5c9fdb"/><path d="M1450.20,982.60 L1455.80,993.80 L1444.60,993.80 Z" fill="#5c9fdb"/><path d="M1494.14,984.20 L1499.74,995.40 L1488.54,995.40 Z" fill="#5c9fdb"/><path d="M1538.08,992.50 L1543.68,1003.70 L1532.48,1003.70 Z" fill="#5c9fdb"/><path d="M1582.02,984.20 L1587.62,995.40 L1576.42,995.40 Z" fill="#5c9fdb"/><path d="M1625.95,984.20 L1631.55,995.40 L1620.35,995.40 Z" fill="#5c9fdb"/><path d="M1669.89,991.40 L1675.49,1002.60 L1664.29,1002.60 Z" fill="#5c9fdb"/><path d="M1318.38,980.40 L1323.98,986.00 L1318.38,991.60 L1312.78,986.00 Z" fill="#073a80"/><path d="M1186.57,894.00 L1230.51,831.00 L1274.45,855.80 L1318.38,907.40 L1362.32,844.90 L1406.26,672.00 L1450.20,817.60 L1494.14,855.40 L1538.08,800.00 L1582.02,871.00 L1625.95,884.90 L1669.89,911.00 L1713.83,979.50" fill="none" stroke="#0066b8" stroke-width="2.9" stroke-linejoin="round" stroke-linecap="round"/><rect x="1180.57" y="888.00" width="12.00" height="12.00" fill="#0066b8"/><rect x="1224.51" y="825.00" width="12.00" height="12.00" fill="#0066b8"/><rect x="1268.45" y="849.80" width="12.00" height="12.00" fill="#0066b8"/><rect x="1312.38" y="901.40" width="12.00" height="12.00" fill="#0066b8"/><rect x="1356.32" y="838.90" width="12.00" height="12.00" fill="#0066b8"/><rect x="1400.26" y="666.00" width="12.00" height="12.00" fill="#0066b8"/><rect x="1444.20" y="811.60" width="12.00" height="12.00" fill="#0066b8"/><rect x="1488.14" y="849.40" width="12.00" height="12.00" fill="#0066b8"/><rect x="1532.08" y="794.00" width="12.00" height="12.00" fill="#0066b8"/><rect x="1576.02" y="865.00" width="12.00" height="12.00" fill="#0066b8"/><rect x="1619.95" y="878.90" width="12.00" height="12.00" fill="#0066b8"/><rect x="1663.89" y="905.00" width="12.00" height="12.00" fill="#0066b8"/><rect x="1707.83" y="973.50" width="12.00" height="12.00" fill="#0066b8"/><rect x="1174.89" y="1028.70" width="23.36" height="1.9" fill="#1e2b45"/><rect x="1174.89" y="1050.20" width="23.36" height="1.9" fill="#1e2b45"/><rect x="1219.61" y="1028.70" width="21.80" height="1.9" fill="#1e2b45"/><rect x="1218.83" y="1050.20" width="23.36" height="1.9" fill="#1e2b45"/><rect x="1262.77" y="1028.70" width="23.36" height="1.9" fill="#1e2b45"/><rect x="1262.77" y="1050.20" width="23.36" height="1.9" fill="#1e2b45"/><rect x="1312.54" y="1028.70" width="11.68" height="1.9" fill="#1e2b45"/><rect x="1306.71" y="1050.20" width="23.36" height="1.9" fill="#1e2b45"/><rect x="1356.48" y="1028.70" width="11.68" height="1.9" fill="#1e2b45"/><rect x="1350.64" y="1050.20" width="23.36" height="1.9" fill="#1e2b45"/><rect x="1400.42" y="1028.70" width="11.68" height="1.9" fill="#1e2b45"/><rect x="1394.58" y="1050.20" width="23.36" height="1.9" fill="#1e2b45"/><rect x="1444.36" y="1028.70" width="11.68" height="1.9" fill="#1e2b45"/><rect x="1438.52" y="1050.20" width="23.36" height="1.9" fill="#1e2b45"/><rect x="1488.30" y="1028.70" width="11.68" height="1.9" fill="#1e2b45"/><rect x="1482.46" y="1050.20" width="23.36" height="1.9" fill="#1e2b45"/><rect x="1532.24" y="1028.70" width="11.68" height="1.9" fill="#1e2b45"/><rect x="1526.40" y="1050.20" width="23.36" height="1.9" fill="#1e2b45"/><rect x="1576.18" y="1028.70" width="11.68" height="1.9" fill="#1e2b45"/><rect x="1570.34" y="1050.20" width="23.36" height="1.9" fill="#1e2b45"/><rect x="1620.11" y="1028.70" width="11.68" height="1.9" fill="#1e2b45"/><rect x="1614.27" y="1050.20" width="23.36" height="1.9" fill="#1e2b45"/><rect x="1664.05" y="1028.70" width="11.68" height="1.9" fill="#1e2b45"/><rect x="1658.21" y="1050.20" width="23.36" height="1.9" fill="#1e2b45"/><rect x="1702.15" y="1028.70" width="23.36" height="1.9" fill="#1e2b45"/><rect x="1702.15" y="1050.20" width="23.36" height="1.9" fill="#1e2b45"/><rect x="1159.60" y="1090.9" width="24.2" height="2.5" fill="#f08c0e"/><circle cx="1171.70" cy="1092.10" r="5.40" fill="#f08c0e"/><rect x="1304.40" y="1090.9" width="24.2" height="2.5" fill="#073a80"/><path d="M1316.50,1086.70 L1321.90,1092.10 L1316.50,1097.50 L1311.10,1092.10 Z" fill="#073a80"/><rect x="1412.70" y="1090.9" width="24.2" height="2.5" fill="#0066b8"/><rect x="1419.00" y="1086.30" width="11.60" height="11.60" fill="#0066b8"/><rect x="1547.40" y="1090.9" width="24.2" height="2.5" fill="#5c9fdb"/><path d="M1559.50,1086.70 L1564.90,1097.50 L1554.10,1097.50 Z" fill="#5c9fdb"/><rect x="1825" y="629" width="595" height="1" fill="#e6e6e6"/><rect x="1825" y="753" width="595" height="1" fill="#e6e6e6"/><rect x="1825" y="875" width="595" height="1" fill="#e6e6e6"/><rect x="1825" y="998" width="595" height="1" fill="#ccd6eb"/><path d="M1847.48,982.50 L1893.23,991.30 L1938.98,994.30 L1984.74,987.20 L2030.49,990.10 L2076.25,991.90 L2122.00,990.70 L2167.75,996.00 L2213.51,991.30 L2259.26,993.10 L2305.02,993.10" fill="none" stroke="#f08c0e" stroke-width="2.5" stroke-linejoin="round" stroke-linecap="round"/><circle cx="1847.48" cy="982.50" r="5.60" fill="#f08c0e"/><circle cx="1893.23" cy="991.30" r="5.60" fill="#f08c0e"/><circle cx="1938.98" cy="994.30" r="5.60" fill="#f08c0e"/><circle cx="1984.74" cy="987.20" r="5.60" fill="#f08c0e"/><circle cx="2030.49" cy="990.10" r="5.60" fill="#f08c0e"/><circle cx="2076.25" cy="991.90" r="5.60" fill="#f08c0e"/><circle cx="2122.00" cy="990.70" r="5.60" fill="#f08c0e"/><circle cx="2167.75" cy="996.00" r="5.60" fill="#f08c0e"/><circle cx="2213.51" cy="991.30" r="5.60" fill="#f08c0e"/><circle cx="2259.26" cy="993.10" r="5.60" fill="#f08c0e"/><circle cx="2305.02" cy="993.10" r="5.60" fill="#f08c0e"/><path d="M1847.48,996.00 L1893.23,997.80 L1938.98,981.90 L1984.74,993.70 L2030.49,997.80 L2076.25,987.80 L2122.00,984.80 L2167.75,985.40 L2213.51,997.80 L2259.26,989.50 L2305.02,989.50 L2350.77,996.00" fill="none" stroke="#5c9fdb" stroke-width="2.5" stroke-linejoin="round" stroke-linecap="round"/><path d="M1847.48,990.40 L1853.08,1001.60 L1841.88,1001.60 Z" fill="#5c9fdb"/><path d="M1893.23,992.20 L1898.83,1003.40 L1887.63,1003.40 Z" fill="#5c9fdb"/><path d="M1938.98,976.30 L1944.58,987.50 L1933.38,987.50 Z" fill="#5c9fdb"/><path d="M1984.74,988.10 L1990.34,999.30 L1979.14,999.30 Z" fill="#5c9fdb"/><path d="M2030.49,992.20 L2036.09,1003.40 L2024.89,1003.40 Z" fill="#5c9fdb"/><path d="M2076.25,982.20 L2081.85,993.40 L2070.65,993.40 Z" fill="#5c9fdb"/><path d="M2122.00,979.20 L2127.60,990.40 L2116.40,990.40 Z" fill="#5c9fdb"/><path d="M2167.75,979.80 L2173.35,991.00 L2162.15,991.00 Z" fill="#5c9fdb"/><path d="M2213.51,992.20 L2219.11,1003.40 L2207.91,1003.40 Z" fill="#5c9fdb"/><path d="M2259.26,983.90 L2264.86,995.10 L2253.66,995.10 Z" fill="#5c9fdb"/><path d="M2305.02,983.90 L2310.62,995.10 L2299.42,995.10 Z" fill="#5c9fdb"/><path d="M2350.77,990.40 L2356.37,1001.60 L2345.17,1001.60 Z" fill="#5c9fdb"/><path d="M1984.74,972.10 L1990.34,977.70 L1984.74,983.30 L1979.14,977.70 Z" fill="#073a80"/><path d="M1847.48,892.90 L1893.23,797.60 L1938.98,879.00 L1984.74,923.80 L2030.49,848.00 L2076.25,757.00 L2122.00,852.00 L2167.75,880.00 L2213.51,811.00 L2259.26,791.00 L2305.02,797.60 L2350.77,783.00 L2396.52,953.00" fill="none" stroke="#0066b8" stroke-width="2.9" stroke-linejoin="round" stroke-linecap="round"/><rect x="1841.48" y="886.90" width="12.00" height="12.00" fill="#0066b8"/><rect x="1887.23" y="791.60" width="12.00" height="12.00" fill="#0066b8"/><rect x="1932.98" y="873.00" width="12.00" height="12.00" fill="#0066b8"/><rect x="1978.74" y="917.80" width="12.00" height="12.00" fill="#0066b8"/><rect x="2024.49" y="842.00" width="12.00" height="12.00" fill="#0066b8"/><rect x="2070.25" y="751.00" width="12.00" height="12.00" fill="#0066b8"/><rect x="2116.00" y="846.00" width="12.00" height="12.00" fill="#0066b8"/><rect x="2161.75" y="874.00" width="12.00" height="12.00" fill="#0066b8"/><rect x="2207.51" y="805.00" width="12.00" height="12.00" fill="#0066b8"/><rect x="2253.26" y="785.00" width="12.00" height="12.00" fill="#0066b8"/><rect x="2299.02" y="791.60" width="12.00" height="12.00" fill="#0066b8"/><rect x="2344.77" y="777.00" width="12.00" height="12.00" fill="#0066b8"/><rect x="2390.52" y="947.00" width="12.00" height="12.00" fill="#0066b8"/><rect x="1835.80" y="1028.70" width="23.36" height="1.9" fill="#1e2b45"/><rect x="1835.80" y="1050.20" width="23.36" height="1.9" fill="#1e2b45"/><rect x="1882.33" y="1028.70" width="21.80" height="1.9" fill="#1e2b45"/><rect x="1881.55" y="1050.20" width="23.36" height="1.9" fill="#1e2b45"/><rect x="1927.31" y="1028.70" width="23.36" height="1.9" fill="#1e2b45"/><rect x="1927.31" y="1050.20" width="23.36" height="1.9" fill="#1e2b45"/><rect x="1978.90" y="1028.70" width="11.68" height="1.9" fill="#1e2b45"/><rect x="1973.06" y="1050.20" width="23.36" height="1.9" fill="#1e2b45"/><rect x="2024.65" y="1028.70" width="11.68" height="1.9" fill="#1e2b45"/><rect x="2018.81" y="1050.20" width="23.36" height="1.9" fill="#1e2b45"/><rect x="2070.41" y="1028.70" width="11.68" height="1.9" fill="#1e2b45"/><rect x="2064.57" y="1050.20" width="23.36" height="1.9" fill="#1e2b45"/><rect x="2116.16" y="1028.70" width="11.68" height="1.9" fill="#1e2b45"/><rect x="2110.32" y="1050.20" width="23.36" height="1.9" fill="#1e2b45"/><rect x="2161.91" y="1028.70" width="11.68" height="1.9" fill="#1e2b45"/><rect x="2156.07" y="1050.20" width="23.36" height="1.9" fill="#1e2b45"/><rect x="2207.67" y="1028.70" width="11.68" height="1.9" fill="#1e2b45"/><rect x="2201.83" y="1050.20" width="23.36" height="1.9" fill="#1e2b45"/><rect x="2253.42" y="1028.70" width="11.68" height="1.9" fill="#1e2b45"/><rect x="2247.58" y="1050.20" width="23.36" height="1.9" fill="#1e2b45"/><rect x="2299.18" y="1028.70" width="11.68" height="1.9" fill="#1e2b45"/><rect x="2293.34" y="1050.20" width="23.36" height="1.9" fill="#1e2b45"/><rect x="2344.93" y="1028.70" width="11.68" height="1.9" fill="#1e2b45"/><rect x="2339.09" y="1050.20" width="23.36" height="1.9" fill="#1e2b45"/><rect x="2384.84" y="1028.70" width="23.36" height="1.9" fill="#1e2b45"/><rect x="2384.84" y="1050.20" width="23.36" height="1.9" fill="#1e2b45"/><rect x="1843.10" y="1090.9" width="24.2" height="2.5" fill="#f08c0e"/><circle cx="1855.20" cy="1092.10" r="5.40" fill="#f08c0e"/><rect x="1987.90" y="1090.9" width="24.2" height="2.5" fill="#073a80"/><path d="M2000.00,1086.70 L2005.40,1092.10 L2000.00,1097.50 L1994.60,1092.10 Z" fill="#073a80"/><rect x="2096.20" y="1090.9" width="24.2" height="2.5" fill="#0066b8"/><rect x="2102.50" y="1086.30" width="11.60" height="11.60" fill="#0066b8"/><rect x="2230.90" y="1090.9" width="24.2" height="2.5" fill="#5c9fdb"/><path d="M2243.00,1086.70 L2248.40,1097.50 L2237.60,1097.50 Z" fill="#5c9fdb"/><rect x="474" y="1244" width="577" height="1" fill="#e6e6e6"/><rect x="1164" y="1244" width="571" height="1" fill="#e6e6e6"/><rect x="1871" y="1244" width="548" height="1" fill="#e6e6e6"/></svg>
<div class="t" style="left:585.62px;top:536.00px;font-size:34.42px;color:#0b68b4;transform:scaleX(0.9588);">Total Footprint Actual</div>
<div class="t" style="left:638.94px;top:592.00px;font-size:21.90px;color:#333333;transform:scaleX(0.9588);">Total value: 4710.07 t</div>
<div class="t" style="left:423.71px;top:617.00px;font-size:21.90px;color:#666666;transform:scaleX(0.9588);">1000</div>
<div class="t" style="left:435.47px;top:709.00px;font-size:21.90px;color:#666666;transform:scaleX(0.9588);">750</div>
<div class="t" style="left:435.47px;top:801.00px;font-size:21.90px;color:#666666;transform:scaleX(0.9588);">500</div>
<div class="t" style="left:435.47px;top:894.00px;font-size:21.90px;color:#666666;transform:scaleX(0.9588);">250</div>
<div class="t" style="left:458.78px;top:986.00px;font-size:21.90px;color:#666666;transform:scaleX(0.9588);">0</div>
<div class="t" style="left:502.03px;top:1009.00px;font-size:21.90px;color:#1e2b45;transform:scaleX(0.9588);">10</div>
<div class="t" style="left:502.24px;top:1030.00px;font-size:21.90px;color:#1e2b45;transform:scaleX(0.9588);">24</div>
<div class="t" style="left:545.92px;top:1009.00px;font-size:21.90px;color:#1e2b45;transform:scaleX(0.9588);">11</div>
<div class="t" style="left:545.24px;top:1030.00px;font-size:21.90px;color:#1e2b45;transform:scaleX(0.9588);">24</div>
<div class="t" style="left:588.18px;top:1009.00px;font-size:21.90px;color:#1e2b45;transform:scaleX(0.9588);">12</div>
<div class="t" style="left:588.24px;top:1030.00px;font-size:21.90px;color:#1e2b45;transform:scaleX(0.9588);">24</div>
<div class="t" style="left:636.96px;top:1009.00px;font-size:21.90px;color:#1e2b45;transform:scaleX(0.9588);">1</div>
<div class="t" style="left:631.34px;top:1030.00px;font-size:21.90px;color:#1e2b45;transform:scaleX(0.9588);">25</div>
<div class="t" style="left:680.27px;top:1009.00px;font-size:21.90px;color:#1e2b45;transform:scaleX(0.9588);">2</div>
<div class="t" style="left:674.34px;top:1030.00px;font-size:21.90px;color:#1e2b45;transform:scaleX(0.9588);">25</div>
<div class="t" style="left:723.27px;top:1009.00px;font-size:21.90px;color:#1e2b45;transform:scaleX(0.9588);">3</div>
<div class="t" style="left:717.34px;top:1030.00px;font-size:21.90px;color:#1e2b45;transform:scaleX(0.9588);">25</div>
<div class="t" style="left:766.38px;top:1009.00px;font-size:21.90px;color:#1e2b45;transform:scaleX(0.9588);">4</div>
<div class="t" style="left:760.34px;top:1030.00px;font-size:21.90px;color:#1e2b45;transform:scaleX(0.9588);">25</div>
<div class="t" style="left:809.27px;top:1009.00px;font-size:21.90px;color:#1e2b45;transform:scaleX(0.9588);">5</div>
<div class="t" style="left:803.34px;top:1030.00px;font-size:21.90px;color:#1e2b45;transform:scaleX(0.9588);">25</div>
<div class="t" style="left:852.17px;top:1009.00px;font-size:21.90px;color:#1e2b45;transform:scaleX(0.9588);">6</div>
<div class="t" style="left:846.34px;top:1030.00px;font-size:21.90px;color:#1e2b45;transform:scaleX(0.9588);">25</div>
<div class="t" style="left:895.27px;top:1009.00px;font-size:21.90px;color:#1e2b45;transform:scaleX(0.9588);">7</div>
<div class="t" style="left:889.34px;top:1030.00px;font-size:21.90px;color:#1e2b45;transform:scaleX(0.9588);">25</div>
<div class="t" style="left:938.22px;top:1009.00px;font-size:21.90px;color:#1e2b45;transform:scaleX(0.9588);">8</div>
<div class="t" style="left:932.34px;top:1030.00px;font-size:21.90px;color:#1e2b45;transform:scaleX(0.9588);">25</div>
<div class="t" style="left:981.27px;top:1009.00px;font-size:21.90px;color:#1e2b45;transform:scaleX(0.9588);">9</div>
<div class="t" style="left:975.34px;top:1030.00px;font-size:21.90px;color:#1e2b45;transform:scaleX(0.9588);">25</div>
<div class="t" style="left:1018.02px;top:1009.00px;font-size:21.90px;color:#1e2b45;transform:scaleX(0.9588);">10</div>
<div class="t" style="left:1018.34px;top:1030.00px;font-size:21.90px;color:#1e2b45;transform:scaleX(0.9588);">25</div>
<div class="t" style="left:508.59px;top:1081.00px;font-size:21.90px;color:#737373;transform:scaleX(0.9588);">VESSEL</div>
<div class="t" style="left:651.12px;top:1081.00px;font-size:21.90px;color:#737373;transform:scaleX(0.9588);">RAIL</div>
<div class="t" style="left:761.18px;top:1081.00px;font-size:21.90px;color:#737373;transform:scaleX(0.9588);">TRUCK</div>
<div class="t" style="left:895.90px;top:1081.00px;font-size:21.90px;color:#737373;transform:scaleX(0.9588);">AIRPLANE</div>
<div class="t" style="left:1219.84px;top:536.00px;font-size:34.42px;color:#0b68b4;transform:scaleX(0.9588);">Total Actual CO2 Emissions</div>
<div class="t" style="left:1322.34px;top:592.00px;font-size:21.90px;color:#333333;transform:scaleX(0.9588);">Total value: 4234.19 t</div>
<div class="t" style="left:1107.77px;top:617.00px;font-size:21.90px;color:#666666;transform:scaleX(0.9588);">800</div>
<div class="t" style="left:1107.77px;top:709.00px;font-size:21.90px;color:#666666;transform:scaleX(0.9588);">600</div>
<div class="t" style="left:1107.77px;top:801.00px;font-size:21.90px;color:#666666;transform:scaleX(0.9588);">400</div>
<div class="t" style="left:1107.77px;top:894.00px;font-size:21.90px;color:#666666;transform:scaleX(0.9588);">200</div>
<div class="t" style="left:1131.08px;top:986.00px;font-size:21.90px;color:#666666;transform:scaleX(0.9588);">0</div>
<div class="t" style="left:1174.49px;top:1009.00px;font-size:21.90px;color:#1e2b45;transform:scaleX(0.9588);">10</div>
<div class="t" style="left:1174.70px;top:1030.00px;font-size:21.90px;color:#1e2b45;transform:scaleX(0.9588);">24</div>
<div class="t" style="left:1219.33px;top:1009.00px;font-size:21.90px;color:#1e2b45;transform:scaleX(0.9588);">11</div>
<div class="t" style="left:1218.64px;top:1030.00px;font-size:21.90px;color:#1e2b45;transform:scaleX(0.9588);">24</div>
<div class="t" style="left:1262.53px;top:1009.00px;font-size:21.90px;color:#1e2b45;transform:scaleX(0.9588);">12</div>
<div class="t" style="left:1262.58px;top:1030.00px;font-size:21.90px;color:#1e2b45;transform:scaleX(0.9588);">24</div>
<div class="t" style="left:1312.24px;top:1009.00px;font-size:21.90px;color:#1e2b45;transform:scaleX(0.9588);">1</div>
<div class="t" style="left:1306.62px;top:1030.00px;font-size:21.90px;color:#1e2b45;transform:scaleX(0.9588);">25</div>
<div class="t" style="left:1356.50px;top:1009.00px;font-size:21.90px;color:#1e2b45;transform:scaleX(0.9588);">2</div>
<div class="t" style="left:1350.56px;top:1030.00px;font-size:21.90px;color:#1e2b45;transform:scaleX(0.9588);">25</div>
<div class="t" style="left:1400.43px;top:1009.00px;font-size:21.90px;color:#1e2b45;transform:scaleX(0.9588);">3</div>
<div class="t" style="left:1394.50px;top:1030.00px;font-size:21.90px;color:#1e2b45;transform:scaleX(0.9588);">25</div>
<div class="t" style="left:1444.48px;top:1009.00px;font-size:21.90px;color:#1e2b45;transform:scaleX(0.9588);">4</div>
<div class="t" style="left:1438.44px;top:1030.00px;font-size:21.90px;color:#1e2b45;transform:scaleX(0.9588);">25</div>
<div class="t" style="left:1488.31px;top:1009.00px;font-size:21.90px;color:#1e2b45;transform:scaleX(0.9588);">5</div>
<div class="t" style="left:1482.38px;top:1030.00px;font-size:21.90px;color:#1e2b45;transform:scaleX(0.9588);">25</div>
<div class="t" style="left:1532.14px;top:1009.00px;font-size:21.90px;color:#1e2b45;transform:scaleX(0.9588);">6</div>
<div class="t" style="left:1526.32px;top:1030.00px;font-size:21.90px;color:#1e2b45;transform:scaleX(0.9588);">25</div>
<div class="t" style="left:1576.19px;top:1009.00px;font-size:21.90px;color:#1e2b45;transform:scaleX(0.9588);">7</div>
<div class="t" style="left:1570.26px;top:1030.00px;font-size:21.90px;color:#1e2b45;transform:scaleX(0.9588);">25</div>
<div class="t" style="left:1620.07px;top:1009.00px;font-size:21.90px;color:#1e2b45;transform:scaleX(0.9588);">8</div>
<div class="t" style="left:1614.19px;top:1030.00px;font-size:21.90px;color:#1e2b45;transform:scaleX(0.9588);">25</div>
<div class="t" style="left:1664.06px;top:1009.00px;font-size:21.90px;color:#1e2b45;transform:scaleX(0.9588);">9</div>
<div class="t" style="left:1658.13px;top:1030.00px;font-size:21.90px;color:#1e2b45;transform:scaleX(0.9588);">25</div>
<div class="t" style="left:1701.76px;top:1009.00px;font-size:21.90px;color:#1e2b45;transform:scaleX(0.9588);">10</div>
<div class="t" style="left:1702.07px;top:1030.00px;font-size:21.90px;color:#1e2b45;transform:scaleX(0.9588);">25</div>
<div class="t" style="left:1191.99px;top:1081.00px;font-size:21.90px;color:#737373;transform:scaleX(0.9588);">VESSEL</div>
<div class="t" style="left:1334.52px;top:1081.00px;font-size:21.90px;color:#737373;transform:scaleX(0.9588);">RAIL</div>
<div class="t" style="left:1444.58px;top:1081.00px;font-size:21.90px;color:#737373;transform:scaleX(0.9588);">TRUCK</div>
<div class="t" style="left:1579.30px;top:1081.00px;font-size:21.90px;color:#737373;transform:scaleX(0.9588);">AIRPLANE</div>
<div class="t" style="left:1904.34px;top:536.00px;font-size:34.42px;color:#0b68b4;transform:scaleX(0.9588);">Total Actual NOx Emissions</div>
<div class="t" style="left:2017.55px;top:592.00px;font-size:21.90px;color:#333333;transform:scaleX(0.9588);">Total value: 17.74 t</div>
<div class="t" style="left:1791.89px;top:617.00px;font-size:21.90px;color:#666666;transform:scaleX(0.9588);">3</div>
<div class="t" style="left:1792.10px;top:740.00px;font-size:21.90px;color:#666666;transform:scaleX(0.9588);">2</div>
<div class="t" style="left:1791.99px;top:863.00px;font-size:21.90px;color:#666666;transform:scaleX(0.9588);">1</div>
<div class="t" style="left:1791.78px;top:986.00px;font-size:21.90px;color:#666666;transform:scaleX(0.9588);">0</div>
<div class="t" style="left:1835.40px;top:1009.00px;font-size:21.90px;color:#1e2b45;transform:scaleX(0.9588);">10</div>
<div class="t" style="left:1835.61px;top:1030.00px;font-size:21.90px;color:#1e2b45;transform:scaleX(0.9588);">24</div>
<div class="t" style="left:1882.05px;top:1009.00px;font-size:21.90px;color:#1e2b45;transform:scaleX(0.9588);">11</div>
<div class="t" style="left:1881.37px;top:1030.00px;font-size:21.90px;color:#1e2b45;transform:scaleX(0.9588);">24</div>
<div class="t" style="left:1927.07px;top:1009.00px;font-size:21.90px;color:#1e2b45;transform:scaleX(0.9588);">12</div>
<div class="t" style="left:1927.12px;top:1030.00px;font-size:21.90px;color:#1e2b45;transform:scaleX(0.9588);">24</div>
<div class="t" style="left:1978.60px;top:1009.00px;font-size:21.90px;color:#1e2b45;transform:scaleX(0.9588);">1</div>
<div class="t" style="left:1972.98px;top:1030.00px;font-size:21.90px;color:#1e2b45;transform:scaleX(0.9588);">25</div>
<div class="t" style="left:2024.66px;top:1009.00px;font-size:21.90px;color:#1e2b45;transform:scaleX(0.9588);">2</div>
<div class="t" style="left:2018.73px;top:1030.00px;font-size:21.90px;color:#1e2b45;transform:scaleX(0.9588);">25</div>
<div class="t" style="left:2070.42px;top:1009.00px;font-size:21.90px;color:#1e2b45;transform:scaleX(0.9588);">3</div>
<div class="t" style="left:2064.49px;top:1030.00px;font-size:21.90px;color:#1e2b45;transform:scaleX(0.9588);">25</div>
<div class="t" style="left:2116.28px;top:1009.00px;font-size:21.90px;color:#1e2b45;transform:scaleX(0.9588);">4</div>
<div class="t" style="left:2110.24px;top:1030.00px;font-size:21.90px;color:#1e2b45;transform:scaleX(0.9588);">25</div>
<div class="t" style="left:2161.93px;top:1009.00px;font-size:21.90px;color:#1e2b45;transform:scaleX(0.9588);">5</div>
<div class="t" style="left:2155.99px;top:1030.00px;font-size:21.90px;color:#1e2b45;transform:scaleX(0.9588);">25</div>
<div class="t" style="left:2207.58px;top:1009.00px;font-size:21.90px;color:#1e2b45;transform:scaleX(0.9588);">6</div>
<div class="t" style="left:2201.75px;top:1030.00px;font-size:21.90px;color:#1e2b45;transform:scaleX(0.9588);">25</div>
<div class="t" style="left:2253.43px;top:1009.00px;font-size:21.90px;color:#1e2b45;transform:scaleX(0.9588);">7</div>
<div class="t" style="left:2247.50px;top:1030.00px;font-size:21.90px;color:#1e2b45;transform:scaleX(0.9588);">25</div>
<div class="t" style="left:2299.14px;top:1009.00px;font-size:21.90px;color:#1e2b45;transform:scaleX(0.9588);">8</div>
<div class="t" style="left:2293.26px;top:1030.00px;font-size:21.90px;color:#1e2b45;transform:scaleX(0.9588);">25</div>
<div class="t" style="left:2344.94px;top:1009.00px;font-size:21.90px;color:#1e2b45;transform:scaleX(0.9588);">9</div>
<div class="t" style="left:2339.01px;top:1030.00px;font-size:21.90px;color:#1e2b45;transform:scaleX(0.9588);">25</div>
<div class="t" style="left:2384.45px;top:1009.00px;font-size:21.90px;color:#1e2b45;transform:scaleX(0.9588);">10</div>
<div class="t" style="left:2384.76px;top:1030.00px;font-size:21.90px;color:#1e2b45;transform:scaleX(0.9588);">25</div>
<div class="t" style="left:1875.50px;top:1081.00px;font-size:21.90px;color:#737373;transform:scaleX(0.9588);">VESSEL</div>
<div class="t" style="left:2018.02px;top:1081.00px;font-size:21.90px;color:#737373;transform:scaleX(0.9588);">RAIL</div>
<div class="t" style="left:2128.08px;top:1081.00px;font-size:21.90px;color:#737373;transform:scaleX(0.9588);">TRUCK</div>
<div class="t" style="left:2262.80px;top:1081.00px;font-size:21.90px;color:#737373;transform:scaleX(0.9588);">AIRPLANE</div>
<div class="t" style="left:537.05px;top:1151.00px;font-size:34.42px;color:#0b68b4;transform:scaleX(0.9588);">Total Actual SO2 Emissions</div>
<div class="t" style="left:656.18px;top:1207.00px;font-size:21.90px;color:#333333;transform:scaleX(0.9588);">Total value: 3.44 t</div>
<div class="t" style="left:423.65px;top:1232.00px;font-size:21.90px;color:#666666;transform:scaleX(0.9588);">0.6</div>
<div class="t" style="left:1228.58px;top:1151.00px;font-size:34.42px;color:#0b68b4;transform:scaleX(0.9588);">Total Actual PM Emissions</div>
<div class="t" style="left:1320.11px;top:1207.00px;font-size:21.90px;color:#333333;transform:scaleX(0.9588);">Total value: 598.06 kg</div>
<div class="t" style="left:1107.77px;top:1232.00px;font-size:21.90px;color:#666666;transform:scaleX(0.9588);">100</div>
<div class="t" style="left:1964.43px;top:1151.00px;font-size:34.42px;color:#0b68b4;transform:scaleX(0.9588);">Total Actual Energy</div>
<div class="t" style="left:1972.34px;top:1207.00px;font-size:21.90px;color:#333333;transform:scaleX(0.9588);">Total value: 70676550.96 MJ</div>
<div class="t" style="left:1808.94px;top:1232.00px;font-size:21.90px;color:#666666;transform:scaleX(0.9588);">15M</div>
</body></html>
